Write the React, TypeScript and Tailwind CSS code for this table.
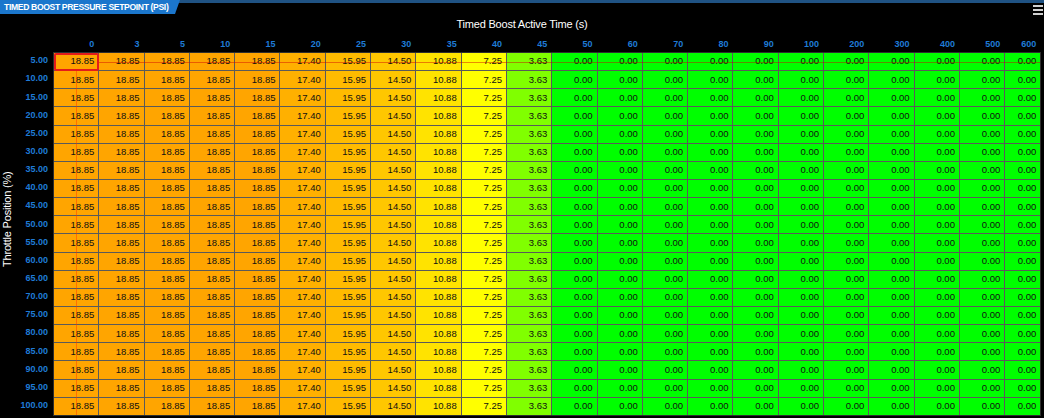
const cols = ["0", "3", "5", "10", "15", "20", "25", "30", "35", "40", "45", "50", "60", "70", "80", "90", "100", "200", "300", "400", "500", "600"];

const rowValues = [
  "18.85", "18.85", "18.85", "18.85", "18.85", "17.40", "15.95", "14.50", "10.88", "7.25", "3.63",
  "0.00", "0.00", "0.00", "0.00", "0.00", "0.00", "0.00", "0.00", "0.00", "0.00", "0.00",
];

const rows = Array.from({ length: 20 }, (_, i) => ((i + 1) * 5).toFixed(2));

// green -> yellow -> orange scale
const cellBg: Record<string, string> = {
  "18.85": "bg-[#ffa500]",
  "17.40": "bg-[#ffb000]",
  "15.95": "bg-[#ffbb00]",
  "14.50": "bg-[#ffc700]",
  "10.88": "bg-[#ffe300]",
  "7.25": "bg-[#ffff00]",
  "3.63": "bg-[#80ff00]",
  "0.00": "bg-[#00ff00]",
};

const App = () => {
  return (
    <div className="flex h-[418px] w-[1044px] flex-col overflow-hidden bg-black font-['Liberation_Sans',Arial,sans-serif]">
      {/* TOP BAR */}
      <div className="relative flex h-[15px] shrink-0 items-start justify-between border-t-[3px] border-[#1f5283]">
        <div className="-mt-[3px] flex h-[14px] w-[180px] items-center bg-[#1b76cc] pl-[4px] text-[8.6px] font-bold tracking-[-0.35px] text-white [clip-path:polygon(0_0,100%_0,calc(100%-5px)_100%,0_100%)]">
          TIMED BOOST PRESSURE SETPOINT (PSI)
        </div>
        <div className="mr-[1px] mt-[2px] flex w-[10px] flex-col gap-[2.5px]">
          <span className="h-[1.5px] bg-[#d0d0d0]" />
          <span className="h-[1.5px] bg-[#d0d0d0]" />
          <span className="h-[1.5px] bg-[#d0d0d0]" />
        </div>
      </div>

      {/* X AXIS TITLE */}
      <div className="flex h-[18px] shrink-0 items-center justify-center text-[11px] tracking-[-0.2px] text-white">
        Timed Boost Active Time (s)
      </div>

      <div className="flex flex-1">
        {/* Y AXIS TITLE */}
        <div className="flex w-[16px] shrink-0 items-center justify-center pb-[12px]">
          <span className="-rotate-90 whitespace-nowrap text-[11px] tracking-[-0.2px] text-white">
            Throttle Position (%)
          </span>
        </div>

        <div className="flex flex-col">
          {/* COLUMN LABELS */}
          <div className="flex h-[19px] items-end pb-[3px] pl-[37px]">
            {cols.map((c, i) => (
              <div
                key={c}
                className={`${i === cols.length - 1 ? "w-[36px]" : "w-[45.3px]"} pr-[4px] text-right text-[9px] font-bold leading-[10px] text-[#1f7bd6]`}
              >
                {c}
              </div>
            ))}
          </div>

          <div className="flex">
            {/* ROW LABELS */}
            <div className="grid w-[37px] grid-rows-[repeat(20,18.15px)]">
              {rows.map((r) => (
                <div key={r} className="flex items-center justify-end pr-[5px] text-[9px] font-bold text-[#1f7bd6]">
                  {r}
                </div>
              ))}
            </div>

            {/* TABLE */}
            <div className="relative grid grid-cols-[repeat(21,44.3px)_35px] grid-rows-[repeat(20,17.15px)] gap-px border border-[#2e2e2e] bg-[#5a5a5a]">
              {rows.map((r) =>
                rowValues.map((v, ci) => (
                  <div
                    key={`${r}-${ci}`}
                    className={`flex items-center justify-end pr-[4px] text-[9.5px] text-[#111] ${cellBg[v]}`}
                  >
                    {v}
                  </div>
                ))
              )}

              {/* crosshair */}
              <div className="absolute left-[45px] right-0 top-[8.5px] h-px bg-[#d00000]/45" />
              <div className="absolute bottom-0 left-[22px] top-[18px] w-px bg-[#ff3000]/45" />

              {/* selected cell */}
              <div className="absolute left-0 top-0 h-[18px] w-[45px] rounded-[2px] border-2 border-[#e41b1b]" />
            </div>
          </div>
        </div>
      </div>
    </div>
  );
};

export default App;
